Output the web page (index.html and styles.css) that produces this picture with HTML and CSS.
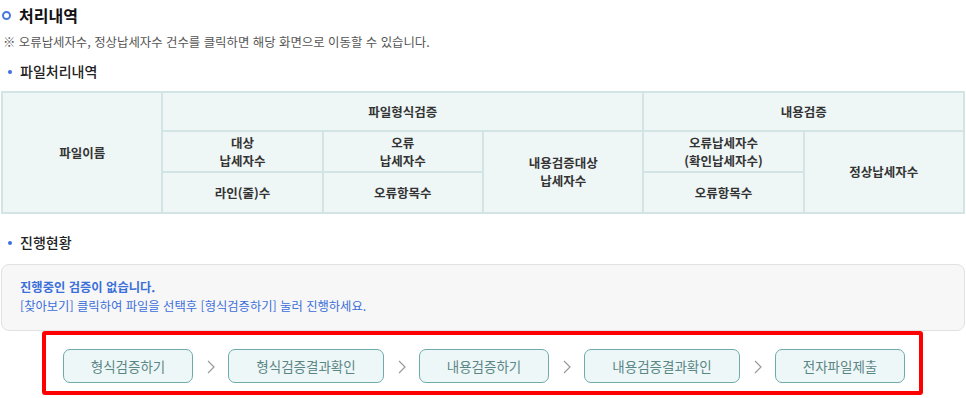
FILE: index.html
```html
<!DOCTYPE html>
<html lang="ko">
<head>
    <meta charset="UTF-8">
    <meta name="viewport" content="width=device-width, initial-scale=1.0">
    <title>처리내역</title>
    <link rel="stylesheet" href="styles.css">
</head>
<body>

<div class="page">
    <h2 class="title"><span class="ring"></span>처리내역</h2>
    <p class="note">※ 오류납세자수, 정상납세자수 건수를 클릭하면 해당 화면으로 이동할 수 있습니다.</p>

    <h3 class="sub">파일처리내역</h3>
    <table class="result">
        <tr class="row-top">
            <th rowspan="3">파일이름</th>
            <th colspan="3">파일형식검증</th>
            <th colspan="2">내용검증</th>
        </tr>
        <tr class="row-mid">
            <th>대상<br>납세자수</th>
            <th>오류<br>납세자수</th>
            <th rowspan="2">내용검증대상<br>납세자수</th>
            <th>오류납세자수<br>(확인납세자수)</th>
            <th rowspan="2">정상납세자수</th>
        </tr>
        <tr class="row-bottom">
            <th>라인(줄)수</th>
            <th>오류항목수</th>
            <th>오류항목수</th>
        </tr>
    </table>

    <h3 class="sub sub-gap">진행현황</h3>
    <div class="status">
        <p class="status-title">진행중인 검증이 없습니다.</p>
        <p class="status-text">[찾아보기] 클릭하여 파일을 선택후 [형식검증하기] 눌러 진행하세요.</p>
    </div>

    <div class="steps">
        <button class="step step-short">형식검증하기</button>
        <span class="arrow"><svg width="10" height="16" viewBox="0 0 10 16"><polyline points="2,2 8,8 2,14" fill="none" stroke="#9a9a9a" stroke-width="1.2"/></svg></span>
        <button class="step step-long">형식검증결과확인</button>
        <span class="arrow"><svg width="10" height="16" viewBox="0 0 10 16"><polyline points="2,2 8,8 2,14" fill="none" stroke="#9a9a9a" stroke-width="1.2"/></svg></span>
        <button class="step step-short">내용검증하기</button>
        <span class="arrow"><svg width="10" height="16" viewBox="0 0 10 16"><polyline points="2,2 8,8 2,14" fill="none" stroke="#9a9a9a" stroke-width="1.2"/></svg></span>
        <button class="step step-long">내용검증결과확인</button>
        <span class="arrow"><svg width="10" height="16" viewBox="0 0 10 16"><polyline points="2,2 8,8 2,14" fill="none" stroke="#9a9a9a" stroke-width="1.2"/></svg></span>
        <button class="step step-short">전자파일제출</button>
    </div>
</div>

</body>
</html>
```

FILE: styles.css
```css
/* 기본 */
body {
    margin: 0;
    padding: 0;
    font-family: "Noto Sans CJK KR", "Noto Sans", sans-serif;
    color: #222;
    background: #fff;
}

.page {
    padding: 3px 1px 0 1px;
}

/* 제목 */
.title {
    display: flex;
    align-items: center;
    margin: 0;
    font-size: 16px;
    font-weight: 700;
    line-height: 24px;
    color: #111;
}

.ring {
    width: 5px;
    height: 5px;
    border: 2px solid #4a78e0;
    border-radius: 50%;
    margin: 0 8px 0 1px;
}

.note {
    margin: 6px 0 0 2px;
    font-size: 12.4px;
    line-height: 18px;
    color: #555;
}

.sub {
    display: flex;
    align-items: center;
    margin: 9px 0 9px 0;
    font-size: 14px;
    font-weight: 500;
    line-height: 22px;
    color: #222;
}

.sub::before {
    content: "";
    width: 4px;
    height: 4px;
    border-radius: 50%;
    background: #3e6fe0;
    margin: 2px 8px 0 7px;
}

.sub-gap {
    margin-top: 17px;
    margin-bottom: 11px;
}

/* 표 */
.result {
    width: 100%;
    border-collapse: collapse;
    table-layout: fixed;
    background: #eef6f6;
}

.result th {
    border: 2px solid #d2e4e4;
    font-size: 12.5px;
    font-weight: 600;
    line-height: 18px;
    color: #333;
    text-align: center;
    padding: 0;
}

.row-top {
    height: 39px;
}

.row-mid,
.row-bottom {
    height: 41px;
}

/* 진행현황 */
.status {
    border: 1px solid #e1e1e1;
    border-radius: 8px;
    background: #f7f7f7;
    padding: 13px 18px 14px;
}

.status p {
    margin: 0;
    font-size: 12.3px;
    line-height: 19px;
    color: #3b6fd9;
}

.status-title {
    font-weight: 700;
}

/* 단계 버튼 */
.steps {
    display: flex;
    align-items: center;
    justify-content: center;
    margin: 0 42px 0 41px;
    padding: 14px 0 8px 3px;
    border: 4px solid #ff0000;
    border-radius: 3px;
}

.step {
    height: 34px;
    border: 1px solid #6fabab;
    border-radius: 7px;
    background: #eef7f7;
    font-family: inherit;
    font-size: 13.5px;
    color: #5b8686;
    cursor: pointer;
}

.step-short {
    width: 130px;
}

.step-long {
    width: 156px;
}

.arrow {
    display: flex;
    justify-content: center;
    width: 35px;
    padding-top: 2px;
}
```
